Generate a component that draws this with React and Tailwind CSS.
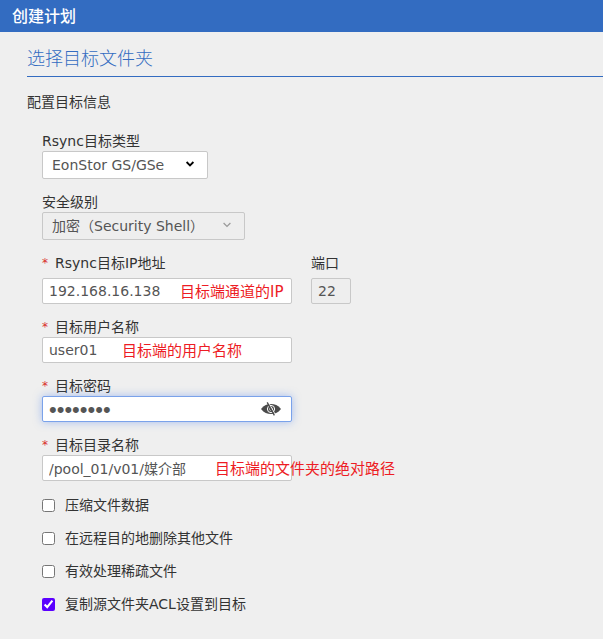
import React, { useState } from 'react';
import clsx from 'clsx';

const fieldFont = "font-['DejaVu_Sans','Noto_Sans_CJK_SC',sans-serif] text-[14px]";

const Chevron = ({ className }) => (
  <svg viewBox="0 0 10 6" className={clsx('pointer-events-none absolute h-[6px] w-[10px]', className)} fill="none" stroke="currentColor" aria-hidden="true">
    <path d="M1.6 1 L5 4.4 L8.4 1" />
  </svg>
);

const EyeOff = () => (
  <svg viewBox="0 0 20 14" className="h-[14px] w-5" aria-hidden="true">
    <path d="M0 7 C3 3.2 6.4 2 10 2 S17 3.2 20 7 C17 10.8 13.6 12 10 12 S3 10.8 0 7 Z" fill="#4a4a4a" />
    <circle cx="10" cy="7" r="3.6" fill="none" stroke="#fff" strokeWidth="1" />
    <circle cx="10" cy="7" r="1.5" fill="none" stroke="#ddd" strokeWidth="0.8" />
    <path d="M7.6 0.6 L14.6 13.2" stroke="#fff" strokeWidth="0.9" />
    <path d="M6.2 0.4 L13.4 13.4" stroke="#4a4a4a" strokeWidth="1.3" />
  </svg>
);

const Label = ({ htmlFor, required, children }) => (
  <label htmlFor={htmlFor} className="flex h-5 items-center gap-1.5 whitespace-nowrap leading-5">
    {required && <span className="w-[7px] text-[12px] text-[#d9302c]">*</span>}
    <span>{children}</span>
  </label>
);

const Select = ({ id, label, options, disabled, className }) => (
  <div>
    <Label htmlFor={id}>{label}</Label>
    <div className={clsx('relative', className)}>
      <select
        id={id}
        disabled={disabled}
        className={clsx(
          'block h-7 w-full appearance-none rounded-xs border border-[#c8c8c8] pl-[9px] text-[#555] opacity-100',
          fieldFont,
          disabled ? 'bg-[#eeeeee]' : 'bg-white'
        )}
      >
        {options.map((o) => (
          <option key={o}>{o}</option>
        ))}
      </select>
      <Chevron
        className={clsx('top-[10px] right-[13px]', disabled ? 'stroke-[1.2] text-[#999]' : 'stroke-[1.8] text-black')}
      />
    </div>
  </div>
);

const TextField = ({ id, label, required, type = 'text', value, disabled, focused, width = 'w-[250px]', labelGap, note, noteClass, children }) => {
  const [text, setText] = useState(value);
  return (
    <div>
      <Label htmlFor={id} required={required}>{label}</Label>
      <div className={clsx('relative', width, labelGap)}>
        <input
          id={id}
          type={type}
          value={text}
          disabled={disabled}
          autoComplete="off"
          onChange={(e) => setText(e.target.value)}
          className={clsx(
            'block h-[26px] w-full rounded-xs border px-1.5 text-[#555] outline-none',
            type === 'password' ? "font-['Liberation_Sans',sans-serif] text-[22px]" : fieldFont,
            disabled ? 'bg-[#eeeeee]' : 'bg-white',
            focused ? 'border-[#7aa2ea] shadow-[0_0_8px_rgba(90,140,240,0.5)]' : 'border-[#c8c8c8]'
          )}
        />
        {note && (
          <span className={clsx('pointer-events-none absolute top-1 whitespace-nowrap text-[15px] leading-5 text-[#ed1c24]', noteClass)}>
            {note}
          </span>
        )}
        {children}
      </div>
    </div>
  );
};

const options = [
  { id: 'compress', label: '压缩文件数据', checked: false },
  { id: 'delete', label: '在远程目的地删除其他文件', checked: false },
  { id: 'sparse', label: '有效处理稀疏文件', checked: false },
  { id: 'acl', label: '复制源文件夹ACL设置到目标', checked: true },
];

const App = () => {
  const [showPassword, setShowPassword] = useState(false);

  return (
    <div className="min-h-screen bg-[#efefef] font-['Noto_Sans_CJK_SC',sans-serif] text-[14px] text-[#333]">
      <header className="flex h-8 items-center bg-[#336cc1] px-3 pb-0.5 text-base font-medium text-white">
        <h1>创建计划</h1>
      </header>

      <main className="pl-[27px]">
        <h2 className="flex h-[45px] items-center border-b border-[#336cc1] pt-1.5 text-[18px] font-light text-[#336cc1]">
          选择目标文件夹
        </h2>
        <h3 className="mt-3.5 leading-5">配置目标信息</h3>

        <form className="mt-5 flex flex-col gap-[13px] pl-[15px] font-['DejaVu_Sans','Noto_Sans_CJK_SC',sans-serif]" onSubmit={(e) => e.preventDefault()}>
          <Select id="type" label="Rsync目标类型" options={['EonStor GS/GSe']} className="w-[166px]" />
          <Select id="security" label="安全级别" options={['加密（Security Shell）']} disabled className="w-[203px]" />

          <div className="flex gap-[19px]">
            <TextField id="ip" label="Rsync目标IP地址" required value="192.168.16.138" labelGap="mt-[5px]" note="目标端通道的IP" noteClass="left-[138px]" />
            <TextField id="port" label="端口" value="22" disabled width="w-10" labelGap="mt-[5px]" />
          </div>
          <TextField id="user" label="目标用户名称" required value="user01" note="目标端的用户名称" noteClass="left-20" />
          <TextField id="password" label="目标密码" required type={showPassword ? 'text' : 'password'} value="password" focused>
            <button
              type="button"
              aria-label="显示密码"
              className="absolute top-[6px] right-[11px]"
              onClick={() => setShowPassword((s) => !s)}
            >
              <EyeOff />
            </button>
          </TextField>
          <TextField id="directory" label="目标目录名称" required value="/pool_01/v01/媒介部" note="目标端的文件夹的绝对路径" noteClass="left-[173px]" />

          <div className="-mt-[5px]">
            {options.map((o) => (
              <div key={o.id} className="flex h-[33px] items-center gap-[10px]">
                <input id={o.id} type="checkbox" defaultChecked={o.checked} className="size-[13px] accent-[#5b00ff]" />
                <label htmlFor={o.id} className="pb-0.5 leading-5">{o.label}</label>
              </div>
            ))}
          </div>
        </form>
      </main>
    </div>
  );
};

export default App;
